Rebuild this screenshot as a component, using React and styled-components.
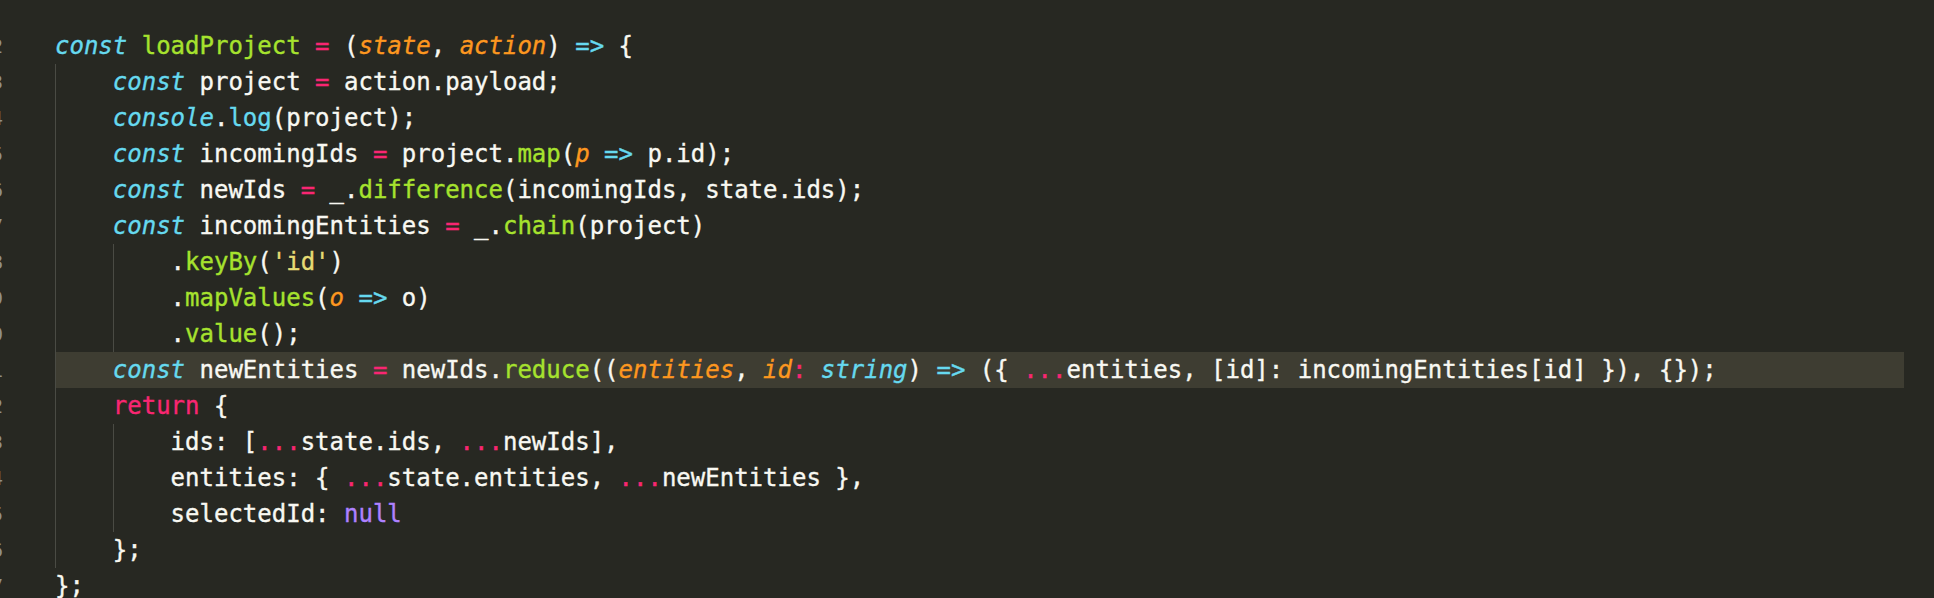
import React from 'react';
import styled, { createGlobalStyle, css } from 'styled-components';

const GlobalStyle = createGlobalStyle`
  html, body {
    margin: 0;
    padding: 0;
    background: #272822;
  }
`;

const colors = {
  plain: '#F8F8F2',
  kw: '#66D9EF',
  fn: '#A6E22E',
  op: '#F92672',
  param: '#FD971F',
  arrow: '#66D9EF',
  sup: '#66D9EF',
  str: '#E6DB74',
  num: '#AE81FF',
  type: '#66D9EF',
};

const italic = ['kw', 'param', 'type'];

// [indent level, tokens, active]; a bare string is plain text
const lines = [
  [0, [['kw', 'const'], ' ', ['fn', 'loadProject'], ' ', ['op', '='], ' (', ['param', 'state'], ', ', ['param', 'action'], ') ', ['arrow', '=>'], ' {']],
  [1, [['kw', 'const'], ' project ', ['op', '='], ' action.payload;']],
  [1, [['kw', 'console'], '.', ['sup', 'log'], '(project);']],
  [1, [['kw', 'const'], ' incomingIds ', ['op', '='], ' project.', ['fn', 'map'], '(', ['param', 'p'], ' ', ['arrow', '=>'], ' p.id);']],
  [1, [['kw', 'const'], ' newIds ', ['op', '='], ' _.', ['fn', 'difference'], '(incomingIds, state.ids);']],
  [1, [['kw', 'const'], ' incomingEntities ', ['op', '='], ' _.', ['fn', 'chain'], '(project)']],
  [2, ['.', ['fn', 'keyBy'], '(', ['str', "'id'"], ')']],
  [2, ['.', ['fn', 'mapValues'], '(', ['param', 'o'], ' ', ['arrow', '=>'], ' o)']],
  [2, ['.', ['fn', 'value'], '();']],
  [1, [['kw', 'const'], ' newEntities ', ['op', '='], ' newIds.', ['fn', 'reduce'], '((', ['param', 'entities'], ', ', ['param', 'id'], ['op', ':'], ' ', ['type', 'string'], ') ', ['arrow', '=>'], ' ({ ', ['op', '...'], 'entities, [id]: incomingEntities[id] }), {});'], true],
  [1, [['op', 'return'], ' {']],
  [2, ['ids: [', ['op', '...'], 'state.ids, ', ['op', '...'], 'newIds],']],
  [2, ['entities: { ', ['op', '...'], 'state.entities, ', ['op', '...'], 'newEntities },']],
  [2, ['selectedId: ', ['num', 'null']]],
  [1, ['};']],
  [0, ['};']],
];

const Editor = styled.div`
  display: flex;
  padding-top: 28px;
  height: 598px;
  box-sizing: border-box;
  overflow: hidden;
  font-family: 'DejaVu Sans Mono', 'Liberation Mono', monospace;
  font-size: 24px;
  line-height: 36px;
`;

const Gutter = styled.div`
  width: 55px;
  flex: none;
`;

const LineNumber = styled.div`
  width: 3px;
  height: 36px;
  display: flex;
  justify-content: flex-end;
  overflow: hidden;
  color: #8f908a;
  font-size: 20px;
`;

const CodeArea = styled.div`
  width: 1849px;
  flex: none;
`;

const Line = styled.div`
  display: flex;
  height: 36px;
  ${(p) =>
    p.$active &&
    css`
      background: #3e3d32;
    `}
`;

const Guide = styled.span`
  flex: none;
  width: 4ch;
  border-left: 1px solid #4a4b44;
  box-sizing: border-box;
`;

const Text = styled.span`
  white-space: pre;
  color: ${colors.plain};
  -webkit-text-stroke: 0.35px currentColor;
`;

const Token = styled.span`
  color: ${(p) => colors[p.$kind]};
  font-style: ${(p) => (italic.includes(p.$kind) ? 'italic' : 'normal')};
`;

export default function App() {
  return (
    <>
      <GlobalStyle />
      <Editor>
        <Gutter>
          {lines.map((_, i) => (
            <LineNumber key={i}>{i + 12}</LineNumber>
          ))}
        </Gutter>
        <CodeArea>
          {lines.map(([indent, tokens, active], i) => (
            <Line key={i} $active={active}>
              {Array.from({ length: indent }).map((_, j) => (
                <Guide key={j} />
              ))}
              <Text>
                {tokens.map((t, k) =>
                  typeof t === 'string' ? (
                    t
                  ) : (
                    <Token key={k} $kind={t[0]}>
                      {t[1]}
                    </Token>
                  )
                )}
              </Text>
            </Line>
          ))}
        </CodeArea>
      </Editor>
    </>
  );
}
